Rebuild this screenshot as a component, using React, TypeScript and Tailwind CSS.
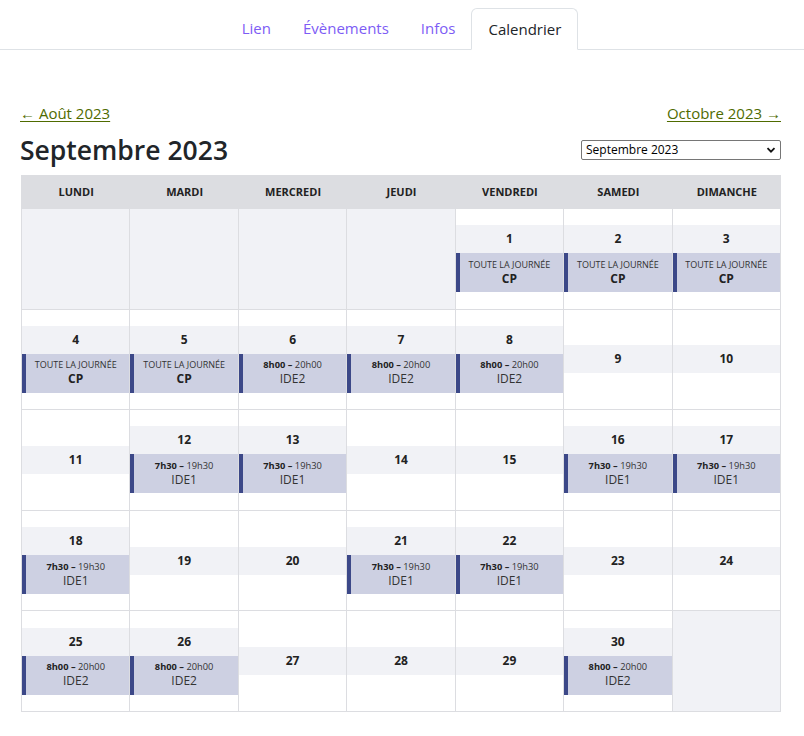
import React from 'react';

type Ev = { allDay?: boolean; start?: string; end?: string; label: string };
type Cell = { day?: number; ev?: Ev };

const CP: Ev = { allDay: true, label: 'CP' };
const IDE2: Ev = { start: '8h00', end: '20h00', label: 'IDE2' };
const IDE1: Ev = { start: '7h30', end: '19h30', label: 'IDE1' };

const weeks: Cell[][] = [
  [{}, {}, {}, {}, { day: 1, ev: CP }, { day: 2, ev: CP }, { day: 3, ev: CP }],
  [
    { day: 4, ev: CP },
    { day: 5, ev: CP },
    { day: 6, ev: IDE2 },
    { day: 7, ev: IDE2 },
    { day: 8, ev: IDE2 },
    { day: 9 },
    { day: 10 },
  ],
  [
    { day: 11 },
    { day: 12, ev: IDE1 },
    { day: 13, ev: IDE1 },
    { day: 14 },
    { day: 15 },
    { day: 16, ev: IDE1 },
    { day: 17, ev: IDE1 },
  ],
  [
    { day: 18, ev: IDE1 },
    { day: 19 },
    { day: 20 },
    { day: 21, ev: IDE1 },
    { day: 22, ev: IDE1 },
    { day: 23 },
    { day: 24 },
  ],
  [
    { day: 25, ev: IDE2 },
    { day: 26, ev: IDE2 },
    { day: 27 },
    { day: 28 },
    { day: 29 },
    { day: 30, ev: IDE2 },
    {},
  ],
];

const days = ['Lundi', 'Mardi', 'Mercredi', 'Jeudi', 'Vendredi', 'Samedi', 'Dimanche'];

function EventBlock({ ev }: { ev: Ev }) {
  return (
    <div className="flex h-[39px] flex-col items-center justify-center border-l-4 border-[#3c4888] bg-[#cdd0e2] pr-1 pb-[2px] text-center leading-[14px] text-[#333]">
      {ev.allDay ? (
        <>
          <div className="text-[9px] uppercase">Toute la journée</div>
          <div className="text-[12px] font-bold text-[#222]">{ev.label}</div>
        </>
      ) : (
        <>
          <div className="text-[9.3px]">
            <span className="font-bold text-[#222]">{ev.start} –</span> {ev.end}
          </div>
          <div className="text-[12px]">{ev.label}</div>
        </>
      )}
    </div>
  );
}

function DayCell({ cell }: { cell: Cell }) {
  if (!cell.day) {
    return <div className="h-[100.6px] border-r border-b border-[#dcdde1] bg-[#f1f2f6]" />;
  }
  return (
    <div className="flex h-[100.6px] flex-col justify-center border-r border-b border-[#dcdde1] bg-white">
      <div className="flex h-[28px] items-center justify-center bg-[#f1f2f6] text-[12px] font-bold text-[#222]">
        {cell.day}
      </div>
      {cell.ev ? <EventBlock ev={cell.ev} /> : null}
    </div>
  );
}

export default function App() {
  return (
    <div className="min-h-[736px] bg-white text-[#212529]" style={{ fontFamily: '"Open Sans", "Noto Sans", sans-serif' }}>
      <nav className="flex justify-center border-b border-[#dee2e6] pt-2">
        {['Lien', 'Évènements', 'Infos'].map((t) => (
          <a key={t} className="px-4 py-2 text-[15px] leading-[24px] text-[#7d5cf5]">
            {t}
          </a>
        ))}
        <a className="-mb-px rounded-t-md border border-[#dee2e6] border-b-white bg-white px-4 py-2 text-[15px] leading-[24px] text-[#212529]">
          Calendrier
        </a>
      </nav>

      <div className="w-[781px] pl-5 pt-[53px]">
        <div className="flex items-center justify-between text-[15px] leading-[20px]">
          <a className="text-[#4f6b00] underline underline-offset-2">← Août 2023</a>
          <a className="text-[#4f6b00] underline underline-offset-2">Octobre 2023 →</a>
        </div>

        <div className="mt-[9px] flex items-center justify-between">
          <h1 className="text-[26.5px] font-semibold leading-[36px] text-[#212529]">Septembre 2023</h1>
          <div className="relative w-[200px]">
            <div className="flex h-[20px] items-center justify-between rounded-[2px] border border-[#767676] bg-white pl-1 pr-1 text-[12px] text-black">
              <span>Septembre 2023</span>
              <svg width="10" height="10" viewBox="0 0 10 10">
                <path d="M1.5 3.2 L5 6.7 L8.5 3.2" fill="none" stroke="#111" strokeWidth="1.8" />
              </svg>
            </div>
          </div>
        </div>

        <div className="ml-px mt-[7px] w-[760px] border-l border-t border-[#dcdde1]">
          <div className="grid h-[33px] grid-cols-7 bg-[#dcdde1]">
            {days.map((d) => (
              <div key={d} className="flex items-center justify-center text-[11px] font-bold uppercase text-[#222]">
                {d}
              </div>
            ))}
          </div>
          {weeks.map((w, i) => (
            <div key={i} className="grid grid-cols-7">
              {w.map((c, j) => (
                <DayCell key={j} cell={c} />
              ))}
            </div>
          ))}
        </div>
      </div>
    </div>
  );
}
